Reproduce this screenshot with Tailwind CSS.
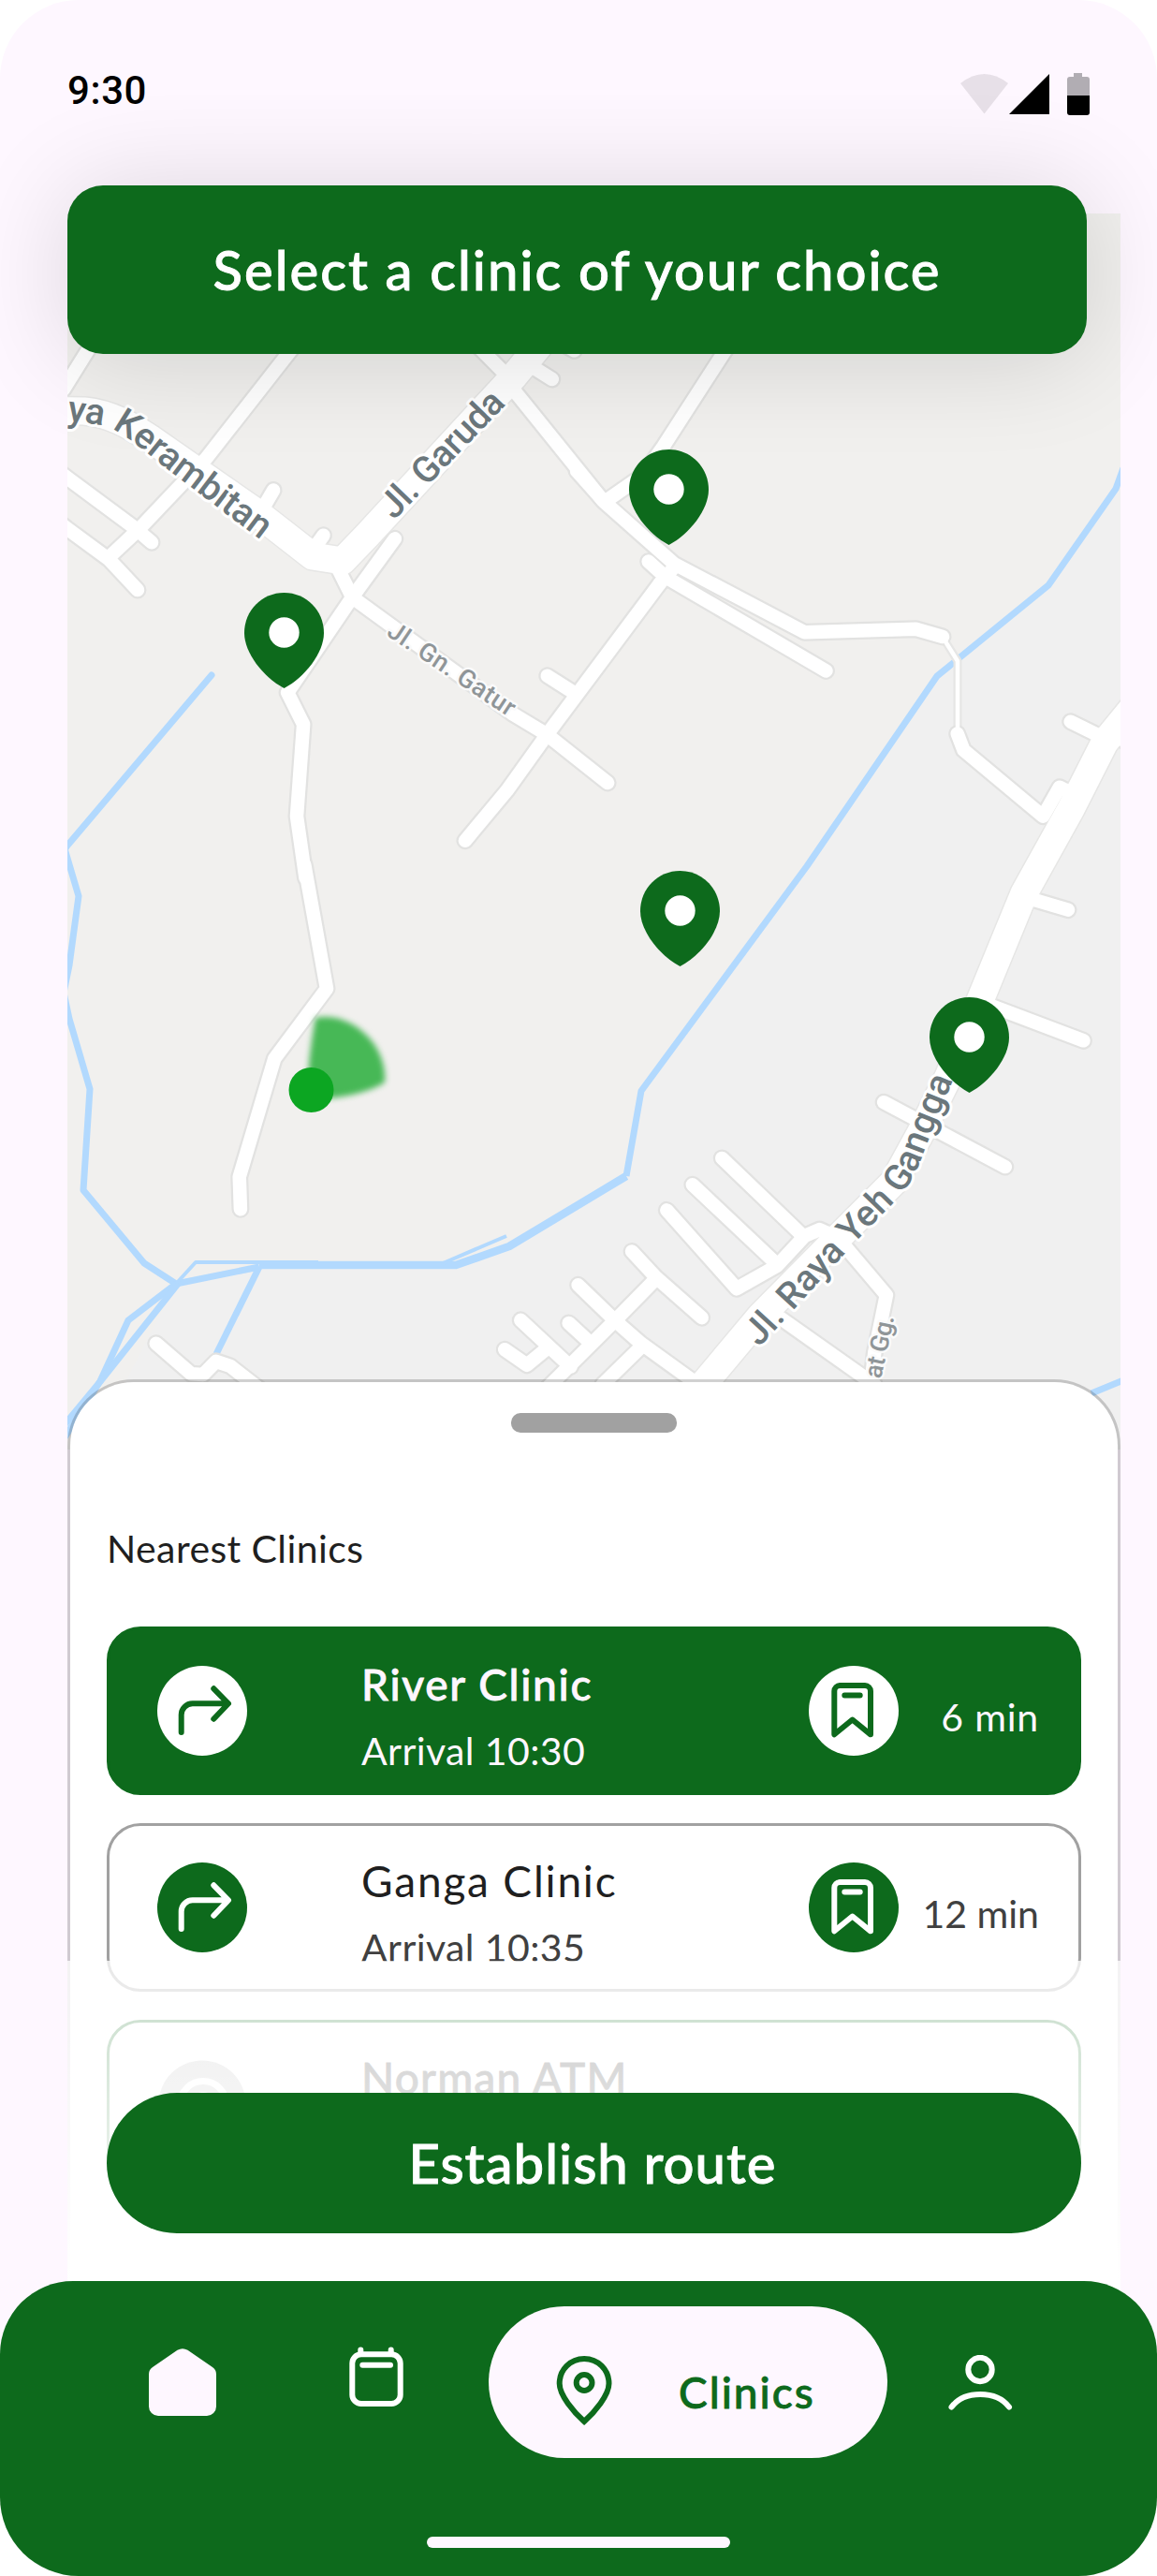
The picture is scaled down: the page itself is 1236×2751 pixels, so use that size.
<!DOCTYPE html>
<html lang="en">
<head>
<meta charset="utf-8">
<title>Clinics</title>
<script src="https://cdn.jsdelivr.net/npm/@tailwindcss/browser@4"></script>
</head>
<body class="bg-white font-[Lato,sans-serif]">
<main class="relative flex h-[2751px] w-[1236px] flex-col overflow-hidden rounded-[84px] bg-[#fef7ff]">

  <!-- status bar -->
  <header class="flex h-[198px] shrink-0 items-start justify-between pl-[72px] pr-[72px]">
    <span class="mt-[67px] font-[Roboto,sans-serif] text-[42px] leading-[60px] font-medium tracking-[0.6px] text-black">9:30</span>
    <svg class="mt-[76px] h-[48px] w-[140px]" viewBox="1024 76 140 48">
      <path d="M1026 89Q1051.500 69 1077 89L1051.500 121.500Z" fill="#1d1b20" fill-opacity=".1"/>
      <path d="M1121 79V122H1078Z" fill="#000"/>
      <path d="M1147 78h9v4h5a3 3 0 0 1 3 3v17h-24V85a3 3 0 0 1 3-3h4z" fill="#b1adb3"/>
      <path d="M1140 102h24v18a3 3 0 0 1-3 3h-18a3 3 0 0 1-3-3z" fill="#000"/>
    </svg>
  </header>

  <!-- title card -->
  <div class="relative z-10 ml-[72px] flex h-[180px] w-[1089px] shrink-0 items-center justify-center rounded-[38px] bg-[#0d6a1c] pb-[1px] shadow-[0_4px_112px_rgba(0,0,0,0.14)]">
    <h1 class="text-[58px] leading-[80px] font-medium tracking-[2px] whitespace-nowrap text-white [-webkit-text-stroke:0.9px_white]">Select a clinic of your choice</h1>
  </div>

  <!-- map -->
  <svg class="-mt-[150px] ml-[72px] h-[1320px] w-[1125px] shrink-0 [&_path]:[vector-effect:non-scaling-stroke]" viewBox="72 228 1125 1320">
    <defs>
      <g id="streets">
        <g transform="translate(60 370) scale(.3954 .3571)">
          <path d="M92 0L20 128"/>
          <path d="M642 0L405 335L225 545L143 630"/>
          <path d="M0 368L30 393L215 545L258 586"/>
          <path d="M0 518L30 545L143 637L220 728"/>
          <path d="M587 430L545 510"/>
          <path d="M722 565L680 630"/>
          <path d="M915 575L800 750L625 1035L668 1130L650 1405L674 1590"/>
          <path d="M755 650L800 750L905 835L1235 1100L1325 1160L1490 1305"/>
          <path d="M1630 710L1330 1155L1218 1328L1105 1478"/>
          <path d="M1327 985L1405 1040"/>
          <path d="M1140 0L1225 95"/>
          <path d="M1225 115L1478 462"/>
          <path d="M1285 60L1340 98"/>
          <path d="M1380 0L1400 12"/>
        </g>
        <g transform="translate(620 370) scale(.3929 .3571)">
          <path d="M395 10L225 300L170 385L75 458"/>
          <path d="M-10 372L65 465L255 650L610 855L912 845L985 868"/>
          <path d="M185 643L230 688L668 970"/>
          <path d="M255 660L215 710"/>
          <path d="M1025 1158L1042 1207L1258 1405L1303 1318L1350 1345"/>
          <path d="M1333 1122L1425 1172"/>
          <path d="M1440 1140L1500 1200"/>
        </g>
        <g transform="translate(60 920) scale(.3954 .3827)">
          <path d="M671 10L731 355L590 550L495 880L498 970"/>
          <path d="M270 1345L365 1430L397 1432L432 1395L470 1408L560 1480"/>
          <path d="M1255 1280L1390 1410"/>
          <path d="M1385 1288L1445 1345"/>
          <path d="M1212 1362L1272 1405L1325 1360"/>
        </g>
        <g transform="translate(620 920) scale(.3929 .3827)">
          <path d="M1220 103L1326 135"/>
          <path d="M1110 400L1368 500"/>
          <path d="M825 672L1155 852"/>
          <path d="M385 828L600 1040"/>
          <path d="M305 902L525 1115"/>
          <path d="M235 973L425 1192L535 1128L610 1045L650 1027L700 1050L832 1210L800 1370L790 1460"/>
          <path d="M140 1088L205 1160L330 1273"/>
          <path d="M205 1165L95 1280L-130 1510"/>
          <path d="M-6 1182L95 1282L165 1345L320 1460"/>
          <path d="M165 1355L60 1460"/>
          <path d="M545 1275L800 1460"/>
        </g>
      </g>
      <g id="roads">
        <path d="M40 438L90 439C120 442 140 455 160 468L275 548L334 594L366 599L392 572L548 403L590 352"/>
        <path d="M1215 750L1180 793L1144 864L1094 954L1048 1066L1013 1150L985 1207L955 1262L891 1326L812 1406L750 1480"/>
      </g>
      <g id="lane">
        <path d="M1008 682L1023 706V784"/>
      </g>
      <path id="kerambitan" d="M71 449C88 452 104 452 117 457C133 463 157 484 176 499L300 593"/>
      <path id="garuda" d="M421 556L560 412"/>
      <path id="gatur" d="M412 678L560 777"/>
      <path id="gangga" d="M811 1439L917 1323L958 1281C976 1262 982 1243 991 1220L1026 1134"/>
      <path id="gg" d="M941 1473L960 1385"/>
      <path id="pin" d="M42.500 0C66 0 85 18.800 85 43C85 64 65 90 42.500 102C20 90 0 64 0 43C0 18.800 19 0 42.500 0Z"/>
    </defs>

    <rect x="72" y="228" width="1125" height="1320" fill="#f1f0ee"/>
    <path d="M1197 508L1120 625L1001 720L856 930L685 1165L669 1255L541 1330L487 1351L277 1352L188 1371L97 1548H1197Z" fill="#f0f0f0"/>

    <!-- rivers -->
    <g fill="none" stroke="#b2d9fe" stroke-width="7" stroke-linejoin="round">
      <path d="M226 721L72 903L60 920" stroke-linecap="round"/>
      <path d="M66 896L84 957L74 1031L68 1060L74 1088L96 1163L89 1271L154 1349L188 1371L277 1353"/>
      <path d="M188 1371L137 1410L107 1475L66 1540"/>
      <path d="M190 1371L105 1478L66 1525"/>
      <path d="M277 1353L231 1446"/>
      <path d="M188 1371L209 1348L340 1348" stroke-width="4"/>
      <path d="M277 1351H487L544 1331L669 1256" stroke-width="8.500"/>
      <path d="M471 1350L541 1320" stroke-width="4"/>
      <path d="M669 1256L685 1165L862 925L1001 722L1120 625L1192 522L1200 500"/>
      <path d="M1166 1488L1200 1474"/>
    </g>

    <!-- road casings, then fills -->
    <g fill="none" stroke-linejoin="round" stroke-linecap="round">
      <use href="#lane" stroke="#e6e6e5" stroke-width="9"/>
      <use href="#streets" stroke="#e2e2e1" stroke-width="19"/>
      <use href="#roads" stroke="#e6e6e5" stroke-width="32"/>
      <use href="#streets" stroke="#fff" stroke-width="14.500"/>
      <use href="#roads" stroke="#fff" stroke-width="29"/>
      <use href="#lane" stroke="#fff" stroke-width="4.500"/>
    </g>

    <!-- street names -->
    <g class="font-[Roboto,sans-serif] font-medium" font-size="39" fill="#6b777c" stroke="#fff" stroke-width="6" stroke-linejoin="round" paint-order="stroke">
      <text><textPath href="#kerambitan" textLength="248">ya Kerambitan</textPath></text>
      <text><textPath href="#garuda" textLength="173">Jl. Garuda</textPath></text>
      <text><textPath href="#gangga" textLength="358">Jl. Raya Yeh Gangga</textPath></text>
    </g>
    <g class="font-[Roboto,sans-serif] font-medium" font-size="27" fill="#8f9598" stroke="#fafafa" stroke-width="5" stroke-linejoin="round" paint-order="stroke">
      <text><textPath href="#gatur" textLength="158">Jl. Gn. Gatur</textPath></text>
      <text><textPath href="#gg" textLength="68">at Gg.</textPath></text>
    </g>

    <!-- user heading and position -->
    <path d="M337 1087C375 1080 414 1115 411 1156Q385 1172 333 1174Q324 1160 337 1087Z" fill="#47b856" class="blur-[3px]"/>
    <circle cx="332.500" cy="1164" r="24" fill="#0ca622"/>

    <!-- clinic pins -->
    <g fill="#0d6a1c">
      <use href="#pin" x="261" y="633"/>
      <use href="#pin" x="672" y="480"/>
      <use href="#pin" x="684" y="930"/>
      <use href="#pin" x="993" y="1065"/>
    </g>
    <g fill="#fff">
      <circle cx="303.500" cy="675.500" r="16.200"/>
      <circle cx="714.500" cy="522.500" r="16.200"/>
      <circle cx="726.500" cy="972.500" r="16.200"/>
      <circle cx="1035.500" cy="1107.500" r="16.200"/>
    </g>
  </svg>

  <!-- bottom sheet -->
  <section class="relative -mt-[75px] ml-[72px] flex h-[1000px] w-[1125px] shrink-0 flex-col rounded-t-[71px] border-x-3 border-t-3 border-black/18 bg-white bg-clip-padding px-[39px]">
    <div class="mt-[33px] ml-[432px] h-[21px] w-[177px] rounded-[10px] bg-[#a1a1a1]"></div>
    <h2 class="mt-[94px] text-[41px] leading-[60px] tracking-[0.4px] text-[#1f1f1f]">Nearest Clinics</h2>

    <div class="mt-[53px] flex flex-col gap-[30px]">
      <article class="flex h-[180px] w-[1041px] shrink-0 items-start rounded-[36px] border-3 border-[#0d6a1c] bg-[#0d6a1c] pl-[51px]">
        <svg class="mt-[39px] size-[96px]" viewBox="0 0 96 96" fill="none" stroke="#0d6a1c" stroke-width="6" stroke-linecap="round" stroke-linejoin="round"><circle cx="48" cy="48" r="48" fill="#fff" stroke="none"/><path d="M25.700 71V52.300a12 12 0 0 1 12-12H75.500M60.300 24.300L76 40.300L60.300 56.700"/></svg>
        <div class="mt-[29px] ml-[122px] w-[478px] text-[#fef7ff]">
          <h3 class="text-[46px] leading-[60px] font-medium tracking-[1.700px] [-webkit-text-stroke:0.8px_#fef7ff]">River Clinic</h3>
          <p class="mt-[11px] text-[41px] leading-[60px] tracking-[0.4px]">Arrival 10:30</p>
        </div>
        <svg class="mt-[39px] size-[96px]" viewBox="0 0 96 96" fill="none" stroke="#0d6a1c" stroke-width="6" stroke-linecap="round" stroke-linejoin="round"><circle cx="48" cy="48" r="48" fill="#fff" stroke="none"/><path d="M33 21H60a6 6 0 0 1 6 6V73.300L46.600 57.500L27.300 73.300V27a6 6 0 0 1 6-6ZM38.300 31.400H54.700"/></svg>
        <p class="mt-[64px] w-[150px] text-right text-[41px] leading-[60px] tracking-[0.8px] text-[#fef7ff]">6 min</p>
      </article>

      <article class="flex h-[180px] w-[1041px] shrink-0 items-start rounded-[36px] border-3 border-[#a1a1a1] bg-white pl-[51px]">
        <svg class="mt-[39px] size-[96px]" viewBox="0 0 96 96" fill="none" stroke="#fff" stroke-width="6" stroke-linecap="round" stroke-linejoin="round"><circle cx="48" cy="48" r="48" fill="#0d6a1c" stroke="none"/><path d="M25.700 71V52.300a12 12 0 0 1 12-12H75.500M60.300 24.300L76 40.300L60.300 56.700"/></svg>
        <div class="mt-[29px] ml-[122px] w-[478px]">
          <h3 class="text-[46px] leading-[60px] tracking-[1.800px] text-[#1f1f1f]">Ganga Clinic</h3>
          <p class="mt-[11px] text-[41px] leading-[60px] tracking-[0.4px] text-[#404040]">Arrival 10:35</p>
        </div>
        <svg class="mt-[39px] size-[96px]" viewBox="0 0 96 96" fill="none" stroke="#fff" stroke-width="6" stroke-linecap="round" stroke-linejoin="round"><circle cx="48" cy="48" r="48" fill="#0d6a1c" stroke="none"/><path d="M33 21H60a6 6 0 0 1 6 6V73.300L46.600 57.500L27.300 73.300V27a6 6 0 0 1 6-6ZM38.300 31.400H54.700"/></svg>
        <p class="mt-[64px] w-[150px] text-right text-[41px] leading-[60px] tracking-[0px] text-[#404040]">12 min</p>
      </article>

      <article class="flex h-[180px] w-[1041px] shrink-0 items-start rounded-[36px] border-3 border-[#0d6a1c] bg-white pl-[51px]">
        <svg class="mt-[39px] size-[96px]" viewBox="0 0 96 96"><circle cx="48" cy="48" r="46.500" fill="#b4b4b4"/><circle cx="49" cy="48" r="24.500" fill="none" stroke="#fff" stroke-width="7"/><circle cx="49" cy="48" r="13" fill="#fff"/></svg>
        <div class="mt-[29px] ml-[122px] w-[478px]">
          <h3 class="text-[46px] leading-[60px] font-medium tracking-[1.200px] text-[#101010] [-webkit-text-stroke:0.8px_#101010]">Norman ATM</h3>
        </div>
      </article>
    </div>

    <!-- fade over the end of the list -->
    <div class="absolute top-[618px] -right-[3px] -left-[3px] h-[382px] bg-linear-to-b from-white/76 to-white to-90%"></div>
    <button class="absolute top-[759px] left-[39px] flex h-[150px] w-[1041px] items-center justify-center rounded-full bg-[#0d6a1c] pr-[3px] pb-[1px] text-[58px] leading-[80px] font-medium tracking-[1px] text-white [-webkit-text-stroke:0.9px_white]">Establish route</button>
  </section>

  <!-- navigation -->
  <nav class="relative -mt-[37px] flex h-[315px] shrink-0 items-start rounded-t-[78px] bg-[#0d6a1c]">
    <svg class="mt-[72px] ml-[159px] size-[72px]" viewBox="0 0 72 72"><path d="M0 27.500Q0 22.500 4 20L30.500 1.800Q36 -1.400 41.500 1.800L68 20Q72 22.500 72 27.500V62a10 10 0 0 1-10 10H10a10 10 0 0 1-10-10Z" fill="#fef7ff"/></svg>
    <svg class="mt-[70px] ml-[142px] h-[65px] w-[58px]" viewBox="0 0 58 65" fill="none" stroke="#fff" stroke-width="6" stroke-linecap="round"><rect x="3.300" y="8.300" width="51.400" height="52.700" rx="9.500"/><path d="M12.300 3.500V8M44.700 3.500V8M14.300 19.800H44"/></svg>
    <div class="mt-[27px] ml-[91px] flex h-[162px] w-[426px] items-start rounded-full bg-[#fef7ff]">
      <svg class="mt-[53px] ml-[72px] h-[74px] w-[60px]" viewBox="0 0 60 74" fill="none" stroke="#0d6a1c" stroke-width="6"><path d="M30.100 3C15.400 3 3.700 14.600 3.700 29.500C3.700 42 19 60 30.100 70C41.200 60 56.500 42 56.500 29.500C56.500 14.600 44.800 3 30.100 3Z"/><circle cx="30.100" cy="28.500" r="8.400"/></svg>
      <span class="mt-[62px] ml-[71px] text-[46px] leading-[60px] font-medium tracking-[2px] text-[#0d6a1c] [-webkit-text-stroke:0.8px_#0d6a1c]">Clinics</span>
    </div>
    <svg class="mt-[79px] ml-[65px] h-[60px] w-[69px]" viewBox="0 0 69 60" fill="none" stroke="#fff" stroke-width="6" stroke-linecap="round"><circle cx="34" cy="15.500" r="12.700"/><path d="M3.500 55.500C10 47 21 42 34.200 42S58.500 47 65 55.500"/></svg>
    <div class="absolute bottom-[30px] left-[456px] h-[12px] w-[324px] rounded-full bg-[#fef7ff]"></div>
  </nav>
</main>
</body>
</html>
